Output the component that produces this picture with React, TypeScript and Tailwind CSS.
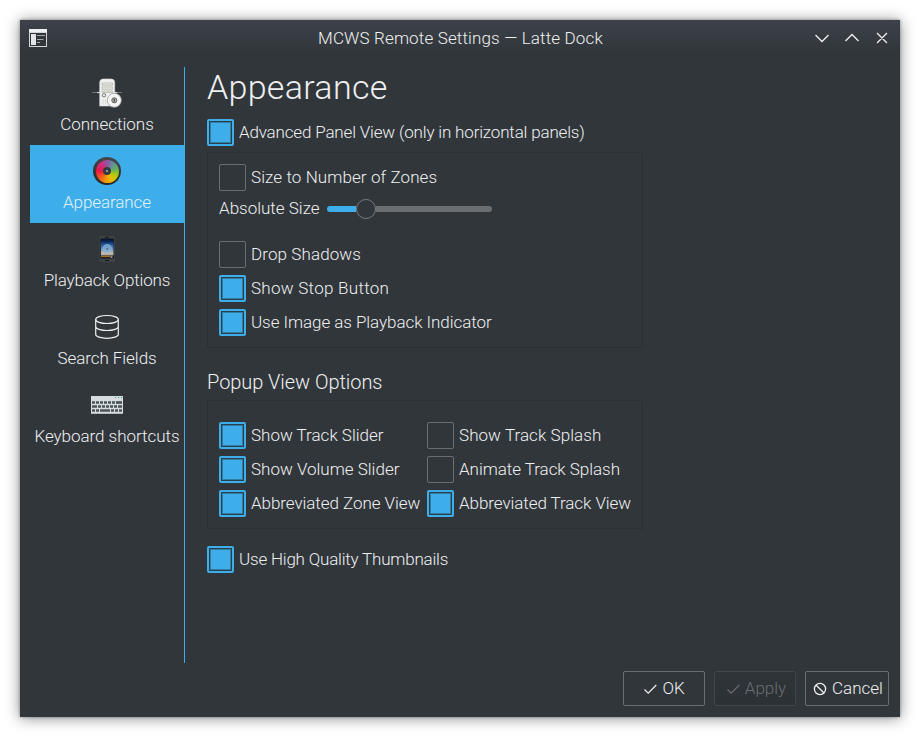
import type { ReactNode } from "react";

function Check({ label, on = false, text = "" }: { label: string; on?: boolean; text?: string }) {
  return (
    <label className="flex h-[27px] items-center gap-[5px] whitespace-nowrap">
      <span
        className={
          on
            ? "flex size-[27px] shrink-0 items-center justify-center rounded-[2px] border-2 border-[#3daee9]"
            : "size-[27px] shrink-0 rounded-[2px] border border-[#6b6e71]"
        }
      >
        {on && <span className="size-[21px] border border-[#327ba3] bg-[#3daee9] outline outline-[#2a3e4a]" />}
      </span>
      <span className={text}>{label}</span>
    </label>
  );
}

function NavItem({ label, icon, active = false, text = "" }: { label: string; icon: ReactNode; active?: boolean; text?: string }) {
  return (
    <div className={active ? "flex h-[78px] flex-col items-center bg-[#3daee9] pt-[10px] text-[#e3f1f9]" : "flex h-[78px] flex-col items-center pt-[10px]"}>
      <div className="size-8 shrink-0">{icon}</div>
      <div className={"mt-[5px] h-5 leading-5 whitespace-nowrap " + text}>{label}</div>
    </div>
  );
}

function ServerIcon() {
  return (
    <svg width="32" height="32" viewBox="0 0 32 32">
      <path d="M1 15.500h30" stroke="#6f7376" strokeWidth="1" />
      <path d="M6 15.500h20" stroke="#c3c5c6" strokeWidth="1.200" />
      <path d="M8.700 29V5.500q0-3.500 3.500-3.500h8q3.500 0 3.500 3.500V29z" fill="#f1f0ef" stroke="#d8d8d7" strokeWidth=".6" />
      <path d="M11 6h10.500v2.200H11zM11 10h10.500v2.200H11zM11 14h10.500v1.500H11z" fill="#e9e9e3" stroke="#b4b6ab" strokeWidth=".8" />
      <circle cx="13" cy="18.300" r="1.700" fill="#eee" stroke="#6d6f6f" strokeWidth=".9" />
      <path d="M12 22.500v5M14.500 22.500v5" stroke="#cfcfcd" strokeWidth=".8" />
      <circle cx="23.300" cy="23.300" r="7" fill="#f5f5f4" stroke="#9b9c9c" strokeWidth=".8" />
      <circle cx="23.300" cy="23.300" r="2.500" fill="#b9b9b9" stroke="#55585a" strokeWidth="1" />
      <path d="M23.300 22v2.600" stroke="#333" strokeWidth="1.200" />
    </svg>
  );
}

function WheelIcon() {
  return (
    <div className="flex size-full items-center justify-center">
      <div className="flex size-[28px] items-center justify-center rounded-full bg-linear-to-b from-[#45484b] to-[#232629]">
        <div className="flex size-[23px] items-center justify-center rounded-full bg-[conic-gradient(#8c5ba0,#618e9c_35deg,#65b160_75deg,#b2cb08_115deg,#e7bd09_155deg,#f28b0c_200deg,#f1521e_235deg,#ed1845_275deg,#d42a82_320deg,#8c5ba0)]">
          <div className="flex size-[8px] items-center justify-center rounded-full bg-[#343b40]">
            <div className="size-[2px] rounded-full bg-[#b6bcc0]" />
          </div>
        </div>
      </div>
    </div>
  );
}

function PlayerIcon() {
  return (
    <svg width="32" height="32" viewBox="0 0 32 32">
      <defs>
        <linearGradient id="screen" x2="0" y2="1">
          <stop stopColor="#07142c" />
          <stop offset=".15" stopColor="#0c2755" />
          <stop offset=".3" stopColor="#1d4f94" />
          <stop offset=".6" stopColor="#5d96c9" />
          <stop offset=".85" stopColor="#c3bcb3" />
          <stop offset="1" stopColor="#b3a797" />
        </linearGradient>
      </defs>
      <rect x="8.500" y="3" width="15.500" height="26" rx="1" fill="#3f4246" />
      <path d="M14 4.300h4M14 27.500h4" stroke="#15181b" />
      <path d="M9.500 5.500h13.500v20H9.500z" fill="#17191b" />
      <path d="M10 6h12.500v16.500H10z" fill="url(#screen)" />
      <circle cx="16.300" cy="15.500" r="4" fill="#7fa9cf" fillOpacity=".7" stroke="#98bbd8" strokeWidth=".8" />
      <circle cx="16.300" cy="15.700" r="1.500" fill="#4f7292" stroke="#a6c3da" strokeWidth=".6" />
      <path d="M10 23.500h9" stroke="#a66c20" strokeWidth="1.200" />
      <path d="M19.500 24h2" stroke="#ddd" strokeWidth="1.200" />
    </svg>
  );
}

function DatabaseIcon() {
  return (
    <svg width="32" height="32" viewBox="0 0 32 32" fill="none" stroke="#eceeef" strokeWidth="1.200">
      <ellipse cx="16" cy="8.500" rx="11.300" ry="4" />
      <path d="M4.700 8.500v15c0 2.100 5 3.800 11.300 3.800s11.300-1.700 11.300-3.800v-15M4.700 15.500c0 2.200 5 4 11.300 4s11.300-1.800 11.300-4" />
    </svg>
  );
}

function KeyboardIcon() {
  return (
    <svg width="32" height="32" viewBox="0 0 32 32">
      <path d="M0 7h32v18H0z" fill="#d6dcdf" />
      <path d="M0 24.500h32" stroke="#b3babd" />
      <path d="M24 8.500h1.200M27 8.500h1.200M30 8.500h1.200" stroke="#39a07b" />
      <g stroke="#4a5355" strokeWidth="2.700">
        <path d="M1 13.500h23" strokeDasharray="3 1" />
        <path d="M25 13.500h6" />
        <path d="M1 17.500h5M7 17.500h3M11 17.500h3M15 17.500h3M19 17.500h3M23 17.500h3M27 17.500h4M1 21.500h3M5 21.500h3M9 21.500h10M20 21.500h3M24 21.500h3M28 21.500h3" />
      </g>
    </svg>
  );
}

function Tick() {
  return (
    <svg width="14" height="14" viewBox="0 0 14 14" fill="none" stroke="currentColor" strokeWidth="1.200">
      <path d="M1.500 7.500l3.700 3.700L13.300 3" />
    </svg>
  );
}

export default function App() {
  return (
    <div className="h-[737px] w-[920px] overflow-hidden bg-white p-5 font-['Roboto',sans-serif] text-[17px] font-light text-[#eff0f1]">
      <div className="flex h-[697px] w-[880px] flex-col bg-[#31363b] shadow-[0_1px_14px_rgba(0,0,0,0.45),0_0_3px_rgba(0,0,0,0.35)]">
        <header className="flex h-[47px] shrink-0 bg-linear-to-b from-[#3d424b] to-[#31363b] to-[32px] pl-[9px]">
          <svg className="mt-[9px]" width="18" height="18" viewBox="0 0 18 18">
            <path d="M0 0h18v18H0z" fill="#d3d5d6" />
            <path d="M0 0h18v3H0z" fill="#eff0f1" />
            <path d="M1 4h16v13H1z" fill="#31363b" />
            <path d="M2 5h5v11H2z" fill="#e3e4e6" />
            <path d="M8 6.500h8M8 10.500h6.500M8 13.500h3" stroke="#a6a9ac" strokeWidth="1.200" />
          </svg>
          <div className="h-9 flex-1 text-center leading-9">
            <span className="ml-[60px] tracking-[0.15px]">MCWS Remote Settings — Latte Dock</span>
          </div>
          <svg className="mt-[10px] mr-[10px]" width="76" height="16" viewBox="0 0 76 16" fill="none" stroke="#eff0f1" strokeWidth="1.300">
            <path d="M1.500 5l6.500 6.500L14.500 5M31.500 11L38 4.500 44.500 11M63 3l10 10M73 3L63 13" />
          </svg>
        </header>
        <div className="flex h-[596px] shrink-0 pl-[10px]">
          <nav className="w-[155px] shrink-0 border-r border-[#3daee9]">
            <NavItem label="Connections" icon={<ServerIcon />} />
            <NavItem label="Appearance" icon={<WheelIcon />} text="tracking-[-0.1px]" active />
            <NavItem label="Playback Options" icon={<PlayerIcon />} text="tracking-[-0.15px]" />
            <NavItem label="Search Fields" icon={<DatabaseIcon />} text="tracking-[-0.05px]" />
            <NavItem label="Keyboard shortcuts" icon={<KeyboardIcon />} text="tracking-[-0.04px]" />
          </nav>
          <main className="box-content flex w-[436px] flex-col pl-[22px]">
            <h1 className="h-[52px] shrink-0 text-[34px] leading-[41px] tracking-[0.3px]">Appearance</h1>
            <Check label="Advanced Panel View (only in horizontal panels)" text="tracking-[-0.17px]" on />
            <section className="mt-[6px] h-[196px] shrink-0 border border-[#2b3034] px-[11px] pt-[11px]">
              <Check label="Size to Number of Zones" text="tracking-[0.09px]" />
              <div className="flex h-9 items-center gap-[7px]">
                <span className="w-[101px] whitespace-nowrap">Absolute Size</span>
                <div className="flex h-[21px] w-[165px] items-center">
                  <div className="h-[6px] w-[29px] rounded-l-full bg-[#3daee9]" />
                  <div className="size-5 rounded-full border-[1.5px] border-[#7b7e81] bg-[#31363b]" />
                  <div className="h-[6px] flex-1 rounded-r-full bg-[#6b6e71]" />
                </div>
              </div>
              <div className="mt-[14px] flex flex-col gap-[7px]">
                <Check label="Drop Shadows" text="tracking-[0.1px]" />
                <Check label="Show Stop Button" text="tracking-[0.27px]" on />
                <Check label="Use Image as Playback Indicator" text="tracking-[-0.06px]" on />
              </div>
            </section>
            <h2 className="mt-[20px] h-8 text-[20px] leading-[28px] tracking-[-0.06px]">Popup View Options</h2>
            <section className="grid h-[129px] shrink-0 grid-cols-[208px_1fr] content-start gap-y-[7px] border border-[#2b3034] pt-[21px] pl-[11px]">
              <Check label="Show Track Slider" on />
              <Check label="Show Track Splash" text="tracking-[0.06px]" />
              <Check label="Show Volume Slider" on />
              <Check label="Animate Track Splash" text="tracking-[-0.04px]" />
              <Check label="Abbreviated Zone View" text="tracking-[-0.06px]" on />
              <Check label="Abbreviated Track View" text="tracking-[-0.07px]" on />
            </section>
            <div className="mt-[17px]">
              <Check label="Use High Quality Thumbnails" text="tracking-[-0.2px]" on />
            </div>
          </main>
        </div>
        <footer className="flex justify-end gap-[9px] pt-[8px] pr-[11px]">
          <button className="flex h-[35px] w-[82px] items-center justify-center gap-[5px] rounded-[2px] border border-[#6b6e71]">
            <Tick />
            <span>OK</span>
          </button>
          <button className="flex h-[35px] w-[82px] items-center justify-center gap-[5px] rounded-[2px] border border-[#41464a] bg-linear-to-b from-[#2f3439] to-[#2c3135] pl-[2px] text-[#6a6e71]">
            <Tick />
            <span>Apply</span>
          </button>
          <button className="flex h-[35px] w-[84px] items-center justify-center gap-[5px] rounded-[2px] border border-[#6b6e71] pl-[2px]">
            <svg width="14" height="14" viewBox="0 0 14 14" fill="none" stroke="currentColor" strokeWidth="1.300">
              <circle cx="7" cy="7" r="5.600" />
              <path d="M3 3l8 8" />
            </svg>
            <span>Cancel</span>
          </button>
        </footer>
      </div>
    </div>
  );
}
